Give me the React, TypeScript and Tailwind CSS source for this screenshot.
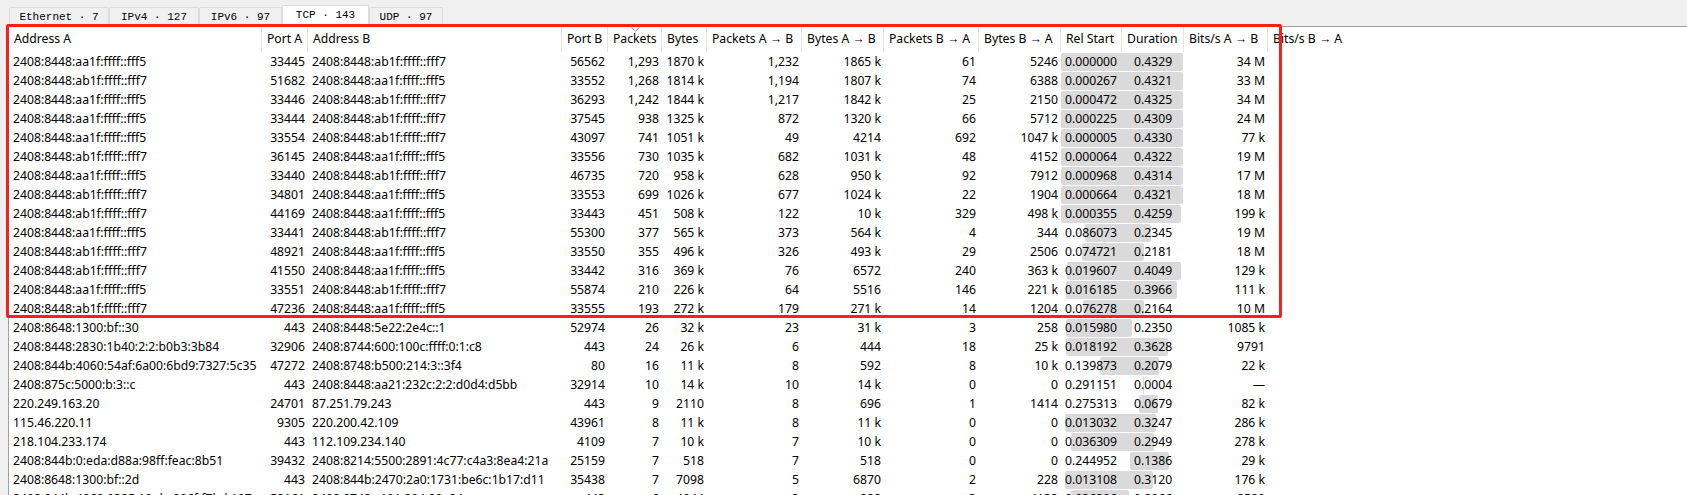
const rows: string[][] = [
  ["2408:8448:aa1f:ffff::fff5","33445","2408:8448:ab1f:ffff::fff7","56562","1,293","1870 k","1,232","1865 k","61","5246","0.000000","0.4329","34 M"],
  ["2408:8448:ab1f:ffff::fff7","51682","2408:8448:aa1f:ffff::fff5","33552","1,268","1814 k","1,194","1807 k","74","6388","0.000267","0.4321","33 M"],
  ["2408:8448:aa1f:ffff::fff5","33446","2408:8448:ab1f:ffff::fff7","36293","1,242","1844 k","1,217","1842 k","25","2150","0.000472","0.4325","34 M"],
  ["2408:8448:aa1f:ffff::fff5","33444","2408:8448:ab1f:ffff::fff7","37545","938","1325 k","872","1320 k","66","5712","0.000225","0.4309","24 M"],
  ["2408:8448:aa1f:ffff::fff5","33554","2408:8448:ab1f:ffff::fff7","43097","741","1051 k","49","4214","692","1047 k","0.000005","0.4330","77 k"],
  ["2408:8448:ab1f:ffff::fff7","36145","2408:8448:aa1f:ffff::fff5","33556","730","1035 k","682","1031 k","48","4152","0.000064","0.4322","19 M"],
  ["2408:8448:aa1f:ffff::fff5","33440","2408:8448:ab1f:ffff::fff7","46735","720","958 k","628","950 k","92","7912","0.000968","0.4314","17 M"],
  ["2408:8448:ab1f:ffff::fff7","34801","2408:8448:aa1f:ffff::fff5","33553","699","1026 k","677","1024 k","22","1904","0.000664","0.4321","18 M"],
  ["2408:8448:ab1f:ffff::fff7","44169","2408:8448:aa1f:ffff::fff5","33443","451","508 k","122","10 k","329","498 k","0.000355","0.4259","199 k"],
  ["2408:8448:aa1f:ffff::fff5","33441","2408:8448:ab1f:ffff::fff7","55300","377","565 k","373","564 k","4","344","0.086073","0.2345","19 M"],
  ["2408:8448:ab1f:ffff::fff7","48921","2408:8448:aa1f:ffff::fff5","33550","355","496 k","326","493 k","29","2506","0.074721","0.2181","18 M"],
  ["2408:8448:ab1f:ffff::fff7","41550","2408:8448:aa1f:ffff::fff5","33442","316","369 k","76","6572","240","363 k","0.019607","0.4049","129 k"],
  ["2408:8448:aa1f:ffff::fff5","33551","2408:8448:ab1f:ffff::fff7","55874","210","226 k","64","5516","146","221 k","0.016185","0.3966","111 k"],
  ["2408:8448:ab1f:ffff::fff7","47236","2408:8448:aa1f:ffff::fff5","33555","193","272 k","179","271 k","14","1204","0.076278","0.2164","10 M"],
  ["2408:8648:1300:bf::30","443","2408:8448:5e22:2e4c::1","52974","26","32 k","23","31 k","3","258","0.015980","0.2350","1085 k"],
  ["2408:8448:2830:1b40:2:2:b0b3:3b84","32906","2408:8744:600:100c:ffff:0:1:c8","443","24","26 k","6","444","18","25 k","0.018192","0.3628","9791"],
  ["2408:844b:4060:54af:6a00:6bd9:7327:5c35","47272","2408:8748:b500:214:3::3f4","80","16","11 k","8","592","8","10 k","0.139873","0.2079","22 k"],
  ["2408:875c:5000:b:3::c","443","2408:8448:aa21:232c:2:2:d0d4:d5bb","32914","10","14 k","10","14 k","0","0","0.291151","0.0004","—"],
  ["220.249.163.20","24701","87.251.79.243","443","9","2110","8","696","1","1414","0.275313","0.0679","82 k"],
  ["115.46.220.11","9305","220.200.42.109","43961","8","11 k","8","11 k","0","0","0.013032","0.3247","286 k"],
  ["218.104.233.174","443","112.109.234.140","4109","7","10 k","7","10 k","0","0","0.036309","0.2949","278 k"],
  ["2408:844b:0:eda:d88a:98ff:feac:8b51","39432","2408:8214:5500:2891:4c77:c4a3:8ea4:21a","25159","7","518","7","518","0","0","0.244952","0.1386","29 k"],
  ["2408:8648:1300:bf::2d","443","2408:844b:2470:2a0:1731:be6c:1b17:d11","35438","7","7098","5","6870","2","228","0.013108","0.3120","176 k"],
  ["2408:844b:4060:9325:10:da:806f:f7bd:197","58161","2408:8748:c101:204:80::84","443","6","4044","3","888","3","4133","0.036306","0.2066","8529"],
];

const headers = ["Address A","Port A","Address B","Port B","Packets","Bytes","Packets A → B","Bytes A → B","Packets B → A","Bytes B → A","Rel Start","Duration","Bits/s A → B","Bits/s B → A"];
const tabs = ["Ethernet · 7","IPv4 · 127","IPv6 · 97","TCP · 143","UDP · 97"];
const tabWidths = ["w-[100px]","w-[90px]","w-[83px]","w-[87px]","w-[74px]"];
const grid = "grid grid-cols-[253px_46px_254px_46px_54px_45px_95px_82px_95px_82px_61px_62px_84px_1fr]";
const leftCols = [0, 2];

export default function App() {
  return (
    <div className="relative h-[495px] w-full overflow-hidden bg-[#f0f0f0] text-[12.2px] text-black font-['Noto_Sans',sans-serif]">
      <div className="flex h-[26px] items-end pl-[9px]">
        {tabs.map((t, i) => (
          <div
            key={t}
            className={`${tabWidths[i]} flex items-center justify-center rounded-t-[2px] border border-b-0 border-[#dcdcdc] font-['Liberation_Mono',monospace] text-[11px] whitespace-nowrap ${i === 3 ? "h-[21px] bg-white pb-[2px]" : "h-[19px] bg-[#f0f0f0]"}`}
          >
            {t}
          </div>
        ))}
      </div>
      <div className="ml-[8px] h-[469px] overflow-hidden border-t border-l border-[#a0a0a0] bg-white">
        <div className={`${grid} h-[25px]`}>
          {headers.map((h, i) => (
            <div key={h} className={`relative flex items-center overflow-visible whitespace-nowrap border-r border-[#e5e5e5] pl-[5px] ${i === 13 ? "border-r-0" : ""}`}>
              {i === 4 && (
                <svg className="absolute left-[23px] top-0" width="9" height="5" viewBox="0 0 9 5" fill="none">
                  <path d="M0.5 0.5L4.5 4L8.5 0.5" stroke="#a0a0a0" strokeWidth="1" />
                </svg>
              )}
              {h}
            </div>
          ))}
        </div>
        {rows.map((r) => {
          const start = parseFloat(r[10]);
          const dur = parseFloat(r[11]);
          return (
            <div key={r[1] + r[0]} className={`${grid} h-[19px] leading-[19px]`}>
              {r.slice(0, 10).map((c, i) => (
                <div key={i} className={`whitespace-nowrap ${leftCols.includes(i) ? "pl-[4px]" : "pr-[3px] text-right"}`}>
                  {c}
                </div>
              ))}
              <div className="relative col-span-2 flex">
                <div
                  className="absolute top-[1px] h-[18px] rounded-[2px] bg-[#dadada]"
                  style={{ left: `${start * 282}px`, width: `${dur * 282}px` }}
                />
                <div className="relative w-[61px] pl-[4px]">{r[10]}</div>
                <div className="relative pl-[12px]">{r[11]}</div>
              </div>
              <div className="pr-[3px] text-right">{r[12]}</div>
            </div>
          );
        })}
      </div>
      <div className="pointer-events-none absolute left-[6px] top-[24px] h-[294px] w-[1276px] rounded-[2px] border-[3px] border-[#f5221b]" />
    </div>
  );
}
